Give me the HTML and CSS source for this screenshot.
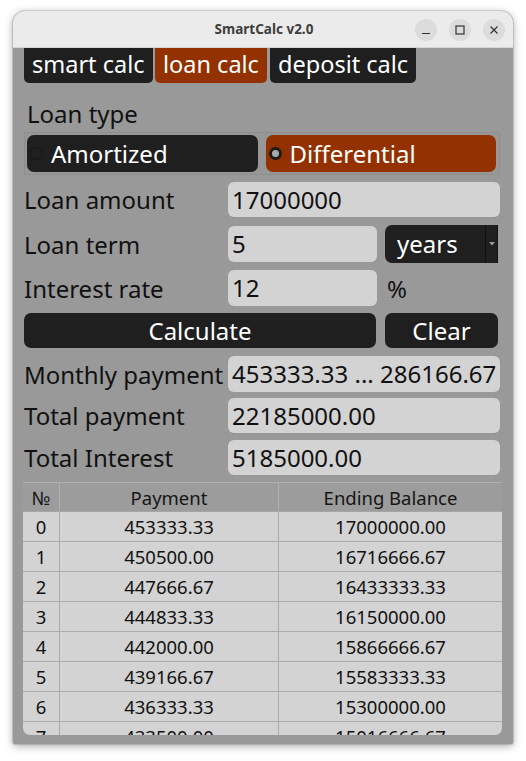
FILE: index.html
```html
<!DOCTYPE html>
<html>
<head>
<meta charset="utf-8">
<link rel="stylesheet" href="styles.css">
</head>
<body>
<div class="window">
  <div class="titlebar">
    <div class="title">SmartCalc v2.0</div>
    <div class="wbtns">
      <div class="wbtn"><svg width="10" height="10" viewBox="0 0 10 10"><path d="M1 8.5h8" stroke="#333" stroke-width="1.2"/></svg></div>
      <div class="wbtn"><svg width="10" height="10" viewBox="0 0 10 10"><rect x="1" y="1" width="8" height="8" fill="none" stroke="#333" stroke-width="1.2"/></svg></div>
      <div class="wbtn"><svg width="10" height="10" viewBox="0 0 10 10"><path d="M1.5 1.5l7 7M8.5 1.5l-7 7" stroke="#333" stroke-width="1.2"/></svg></div>
    </div>
  </div>
  <div class="content">
    <div class="tabs">
      <div class="tab t1">smart calc</div>
      <div class="tab t2 active">loan calc</div>
      <div class="tab t3">deposit calc</div>
    </div>
    <div class="loantype">Loan type</div>
    <div class="group">
      <div class="radio-btn"><span class="radio"></span>Amortized</div>
      <div class="radio-btn active"><span class="radio checked"></span>Differential</div>
    </div>
    <div class="row r-amount">
      <div class="label">Loan amount</div>
      <div class="field wide">17000000</div>
    </div>
    <div class="row r-term">
      <div class="label">Loan term</div>
      <div class="field short">5</div>
      <div class="combo"><span class="ctext">years</span><span class="cdrop"><svg width="6" height="4" viewBox="0 0 6 4"><path d="M0 0h6L3 3.5z" fill="#9a9a9a"/></svg></span></div>
    </div>
    <div class="row r-rate">
      <div class="label">Interest rate</div>
      <div class="field short">12</div>
      <div class="pct">%</div>
    </div>
    <div class="btnrow">
      <div class="btn calc">Calculate</div>
      <div class="btn clear">Clear</div>
    </div>
    <div class="row r-monthly">
      <div class="label">Monthly payment</div>
      <div class="field wide">453333.33 ... 286166.67</div>
    </div>
    <div class="row r-total">
      <div class="label">Total payment</div>
      <div class="field wide">22185000.00</div>
    </div>
    <div class="row r-interest">
      <div class="label">Total Interest</div>
      <div class="field wide">5185000.00</div>
    </div>
    <div class="table">
      <div class="trow head"><div class="c1">№</div><div class="c2">Payment</div><div class="c3">Ending Balance</div></div>
      <div class="trow"><div class="c1">0</div><div class="c2">453333.33</div><div class="c3">17000000.00</div></div>
      <div class="trow"><div class="c1">1</div><div class="c2">450500.00</div><div class="c3">16716666.67</div></div>
      <div class="trow"><div class="c1">2</div><div class="c2">447666.67</div><div class="c3">16433333.33</div></div>
      <div class="trow"><div class="c1">3</div><div class="c2">444833.33</div><div class="c3">16150000.00</div></div>
      <div class="trow"><div class="c1">4</div><div class="c2">442000.00</div><div class="c3">15866666.67</div></div>
      <div class="trow"><div class="c1">5</div><div class="c2">439166.67</div><div class="c3">15583333.33</div></div>
      <div class="trow"><div class="c1">6</div><div class="c2">436333.33</div><div class="c3">15300000.00</div></div>
      <div class="trow"><div class="c1">7</div><div class="c2">433500.00</div><div class="c3">15016666.67</div></div>
    </div>
  </div>
</div>
</body>
</html>
```
FILE: styles.css
```css
* { box-sizing: border-box; }
html, body { margin: 0; padding: 0; background: #ffffff; }
body { font-family: "Noto Sans", "Open Sans", sans-serif; width: 526px; height: 761px; overflow: hidden; }

.window {
  margin: 11px 0 0 13px;
  width: 500px;
  height: 733px;
  border-radius: 12px 12px 2px 2px;
  overflow: hidden;
  background: #999999;
  box-shadow: 0 2px 8px rgba(0,0,0,0.35), 0 0 0 1px rgba(0,0,0,0.12);
  display: flex;
  flex-direction: column;
}
.titlebar {
  height: 37px;
  flex: none;
  background: #ebebeb;
  position: relative;
  display: flex;
  align-items: center;
  justify-content: center;
  border-bottom: 1px solid #d6d6d6;
}
.title { font-weight: bold; font-size: 13.5px; color: #3d3d3d; margin-left: 2px; }
.wbtns { position: absolute; right: 8px; top: 8px; display: flex; gap: 12px; }
.wbtn { width: 22px; height: 22px; border-radius: 50%; background: #dcdcdc; display: flex; align-items: center; justify-content: center; }

.content { padding: 0 13px 0 11px; display: flex; flex-direction: column; flex: 1; min-height: 0; font-size: 24px; color: #111; }

.tabs { display: flex; height: 36px; flex: none; }
.tab { height: 35px; line-height: 33px; color: #fff; background: #1f1f1f; border-radius: 0 0 5px 5px; padding-left: 8px; white-space: nowrap; font-size: 23.5px; }
.tab.active { background: #933100; }
.t1 { width: 129px; }
.t2 { width: 112px; margin-left: 2px; }
.t3 { width: 146px; margin-left: 3px; }

.loantype { margin-top: 12px; height: 36px; line-height: 36px; padding-left: 3px; flex: none; }
.group {
  margin-top: 0;
  height: 43px;
  flex: none;
  border: 1px solid #8e8e8e;
  background: #979797;
  display: flex;
  gap: 8px;
  padding: 2px 3px 2px 2px;
}
.radio-btn { flex: 1; background: #1f1f1f; color: #fff; border-radius: 7px; display: flex; align-items: center; padding-left: 3px; line-height: 1; }
.radio-btn.active { background: #933100; }
.radio { width: 13px; height: 13px; border-radius: 50%; border: 1px solid #161616; background: #1f1f1f; margin-right: 8px; flex: none; }
.radio.checked { background: #aaaaaa; border: 3px solid #1c1c1c; }

.row { display: flex; align-items: center; height: 36px; margin-top: 8px; flex: none; }
.r-amount { margin-top: 7px; height: 35px; }
.r-term { margin-top: 9px; }
.r-rate { margin-top: 8px; }
.r-monthly { margin-top: 8px; }
.r-total { margin-top: 6px; height: 35px; }
.r-interest { margin-top: 7px; height: 35px; }
.label { width: 204px; flex: none; white-space: nowrap; }
.field { height: 100%; background: #d3d3d3; border-radius: 6px; padding-left: 4px; line-height: 35px; white-space: nowrap; overflow: hidden; }
.field.wide { flex: 1; }
.field.short { width: 149px; flex: none; }
.combo { margin-left: 8px; width: 113px; height: 38px; background: #1f1f1f; border-radius: 7px 0 0 7px; color: #fff; display: flex; align-items: center; }
.ctext { flex: 1; padding-left: 12px; line-height: 1; }
.cdrop { width: 13px; height: 100%; border-left: 1px solid #111; border-right: 1px solid #111; display: flex; align-items: center; justify-content: center; }
.pct { margin-left: 10px; }

.btnrow { display: flex; height: 35px; margin-top: 7px; gap: 9px; flex: none; }
.btn { background: #1f1f1f; color: #fff; border-radius: 7px; text-align: center; line-height: 35px; }
.btn.calc { width: 352px; }
.btn.clear { width: 113px; }

.table {
  margin-top: 7px;
  margin-right: -2px;
  margin-left: -1px;
  height: 253px;
  overflow: hidden;
  background: #d3d3d3;
  border-radius: 0 0 7px 7px;
  font-size: 18.5px;
  flex: none;
}
.trow { display: flex; height: 30px; border-bottom: 1px solid #ababab; line-height: 29px; }
.trow > div { text-align: center; }
.c1 { width: 37px; border-right: 1px solid #ababab; }
.c2 { width: 219px; border-right: 1px solid #ababab; }
.c3 { flex: 1; }
.trow.head { background: #9c9c9c; border-top: 1px solid #b0b0b0; border-bottom: 1px solid #a5a5a5; color: #151515; }
.trow.head > div { border-color: #b0b0b0; }
```
